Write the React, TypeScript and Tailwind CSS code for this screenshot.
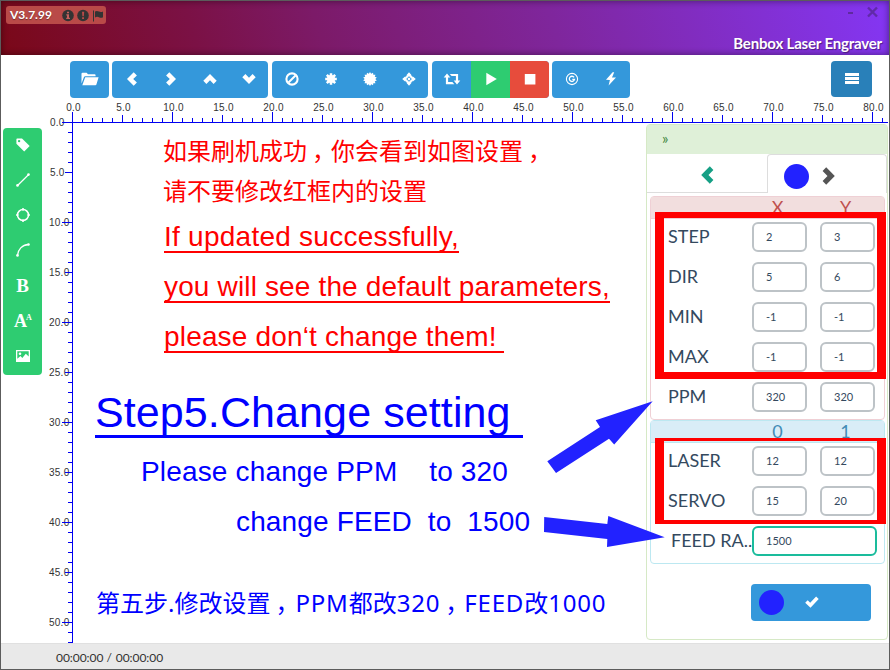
import React from "react";

const xMarks = Array.from({ length: 82 }, (_, i) => i);
const yMarks = Array.from({ length: 53 }, (_, i) => i);

function tickSize(i: number) {
  return i % 10 === 0 ? 10 : i % 5 === 0 ? 7 : 4;
}

/* Both rulers; the viewBox uses window coordinates. */
function Rulers() {
  return (
    <svg className="absolute left-0 top-0" width="888" height="545" viewBox="1 98 888 545" shapeRendering="crispEdges">
      <g fill="#333" fontFamily="Liberation Sans, Arial, sans-serif" fontSize="10" letterSpacing="0.25">
        {xMarks.filter((i) => i % 5 === 0).map((i) => (
          <text key={i} x={73.5 + i * 10} y="111" textAnchor="middle">{i.toFixed(1)}</text>
        ))}
        {yMarks.filter((i) => i % 5 === 0).map((i) => (
          <text key={i} x={i < 10 ? 50 : 49} y={126 + i * 10}>{i.toFixed(1)}</text>
        ))}
      </g>
      <g fill="#0000f0">
        <rect x="62" y="122" width="826" height="1" />
        <rect x="72" y="112" width="1" height="531" />
        {xMarks.map((i) => (
          <rect key={i} x={72 + i * 10} y={122 - tickSize(i)} width="1" height={tickSize(i)} />
        ))}
        {yMarks.map((i) => (
          <rect key={i} x={72 - tickSize(i)} y={122 + i * 10} width={tickSize(i)} height="1" />
        ))}
      </g>
    </svg>
  );
}

function Glyph({ children, w = 18, h = 14 }: { children: React.ReactNode; w?: number; h?: number }) {
  return (
    <svg width={w} height={h} viewBox={`0 0 ${w} ${h}`} fill="currentColor" className="block">
      {children}
    </svg>
  );
}

function burst(points: number, cx: number, cy: number, outer: number, inner: number) {
  return Array.from({ length: points * 2 }, (_, i) => {
    const r = i % 2 ? inner : outer;
    const a = (Math.PI * i) / points;
    return `${(cx + r * Math.sin(a)).toFixed(2)},${(cy - r * Math.cos(a)).toFixed(2)}`;
  }).join(" ");
}

const Chevron = ({ turn }: { turn: number }) => (
  <Glyph w={14} h={14}>
    <path transform={`rotate(${turn} 7 7)`} d="M8.7 0.3 11.9 3.4 8.2 7 11.9 10.6 8.7 13.7 2 7Z" />
  </Glyph>
);

const folder = (
  <Glyph>
    <path d="M0.5 11.5V1.8Q0.5 0.8 1.5.8H5.6L7 2.3H13.6Q14.6 2.3 14.6 3.4V4.2H4.3Q3.4 4.2 3 5Z" />
    <path d="M4.2 5.2H17.6L15.4 12.4Q15.2 13.2 14.3 13.2H1.3Z" />
  </Glyph>
);
const ban = (
  <Glyph w={14}>
    <circle cx="7" cy="7" r="5.6" fill="none" stroke="currentColor" strokeWidth="2.1" />
    <path d="M3.5 10.5 10.5 3.5" stroke="currentColor" strokeWidth="2" />
  </Glyph>
);
const flower = (
  <Glyph w={14}>
    <circle cx="7" cy="7" r="4" />
    <path d="M7 1.2V12.8M1.2 7H12.8M2.8 2.8 11.2 11.2M11.2 2.8 2.8 11.2" stroke="currentColor" strokeWidth="2.5" />
  </Glyph>
);
const sun = (
  <Glyph w={14}>
    <polygon points={burst(14, 7, 7, 7, 5.3)} />
  </Glyph>
);
const move = (
  <Glyph w={14}>
    <path d="M7 .2 9.8 3.4H4.2ZM7 13.8 4.2 10.6H9.8ZM.2 7 3.4 4.2V9.8ZM13.8 7 10.6 9.8V4.2Z" />
    <path d="M7 2.8 11.2 7 7 11.2 2.8 7Z" fill="none" stroke="currentColor" strokeWidth="2" />
    <path d="M5.8 5.8H8.2V8.2H5.8Z" />
  </Glyph>
);
const retweet = (
  <Glyph>
    <path d="M4 1.6 7.3 5.5H5.1V10H9.4L11.3 12.2H2.9V5.5H.7ZM6.8 1.9H15.1V8.6H17.3L14 12.5 10.7 8.6H12.9V4.1H8.6Z" />
  </Glyph>
);
const play = <Glyph w={14}><path d="M2.3 .8 12.8 7 2.3 13.2Z" /></Glyph>;
const stop = <Glyph w={14}><path d="M1.8 2H12.4V12.4H1.8Z" /></Glyph>;
const gcode = (
  <Glyph w={14}>
    <circle cx="7" cy="7" r="5.6" fill="none" stroke="currentColor" strokeWidth="1.1" />
    <path d="M9.1 5.4A2.6 2.6 0 1 0 9.5 7.4H7.3" fill="none" stroke="currentColor" strokeWidth="1.3" />
  </Glyph>
);
const bolt = <Glyph w={14}><path d="M8.6.3 2 7.7 5.9 8 4.6 13.6 12 5.6 8 5.5 10.2.3Z" /></Glyph>;

const tag = (
  <Glyph w={14}>
    <path fillRule="evenodd" d="M.4 1.2Q.4.4 1.2.4H6L13.7 8.1 8.2 13.6.4 5.8ZM3.1 1.9A1.2 1.2 0 1 0 3.1 4.3 1.2 1.2 0 1 0 3.1 1.9Z" />
  </Glyph>
);
const line = (
  <Glyph w={14}>
    <path d="M1.3 12.7 12.7 1.5" stroke="currentColor" strokeWidth="1.2" />
    <circle cx="1.5" cy="12.4" r="1.3" /><circle cx="12.5" cy="1.6" r="1.3" />
  </Glyph>
);
const ring = (
  <Glyph w={14}>
    <circle cx="7" cy="7" r="5.5" fill="none" stroke="currentColor" strokeWidth="1.5" />
    <path d="M6 .3H8V2.4H6ZM6 11.6H8V13.7H6ZM.3 6H2.4V8H.3ZM11.6 6H13.7V8H11.6Z" />
  </Glyph>
);
const arc = (
  <Glyph w={14}>
    <path d="M1.4 12.5C2 6.5 6 2 12.5 1.5" fill="none" stroke="currentColor" strokeWidth="1.3" />
    <circle cx="1.5" cy="12.4" r="1.3" /><circle cx="12.5" cy="1.5" r="1.3" />
  </Glyph>
);
const image = (
  <Glyph w={14}>
    <path fillRule="evenodd" d="M0 1H14V13H0ZM1.3 2.3V9.8L4.5 7 6.3 9 9.8 4.8 12.7 7.5V2.3Z" />
    <circle cx="4" cy="4.7" r="1.3" />
  </Glyph>
);

function ToolGroup({ items }: { items: { icon: React.ReactNode; tone?: string }[] }) {
  return (
    <div className="flex h-[37px] overflow-hidden rounded bg-[#3498db] text-white">
      {items.map((item, i) => (
        <button key={i} className={`flex w-[39px] items-center justify-center pb-[2px] ${item.tone ?? ""}`}>
          {item.icon}
        </button>
      ))}
    </div>
  );
}

function Field({ value }: { value: string }) {
  return (
    <div className="h-[30px] w-[55px] rounded-[6px] border-2 border-[#bdc3c7] bg-white pl-[12px] text-[11px] leading-[25px] text-[#34495e]">
      {value}
    </div>
  );
}

function Row({ label, x, y }: { label: string; x: string; y: string }) {
  return (
    <div className="flex h-10 items-start">
      <span className="w-[101px] pl-[17px] text-[18px] leading-[28px]">{label}</span>
      <Field value={x} />
      <span className="w-[13px]" />
      <Field value={y} />
    </div>
  );
}

function PanelHead({ a, b, tone }: { a: string; b: string; tone: string }) {
  return (
    <div className={`flex h-[22px] overflow-hidden pl-[99px] text-[18px] leading-[20px] ${tone}`}>
      <span className="w-[55px] text-center">{a}</span>
      <span className="ml-[13px] w-[55px] text-center">{b}</span>
    </div>
  );
}

function SettingsPanel() {
  return (
    <aside className="mt-[26px] h-[516px] w-[242px] rounded border border-[#d6e9c6] bg-white text-[#34495e]">
      <div className="h-[29px] bg-[#dff0d8] pl-[15px] text-[15px] leading-[27px] text-[#3c863d]">»</div>
      <div className="flex h-[39px]">
        <div className="flex w-[120px] items-center justify-center border-b border-[#ddd] pt-[4px] text-[#16a085]">
          <svg width="13" height="18" viewBox="0 0 13 18" fill="currentColor"><path d="M8.8.3 12.4 3.9 7.5 9 12.4 14 8.8 17.7.2 9Z" /></svg>
        </div>
        <div className="flex w-[120px] items-center rounded-t border-x border-t border-[#ddd] pl-[16px] pt-[4px]">
          <div className="h-[25px] w-[25px] rounded-full bg-[#2222ff]" />
          <svg className="ml-[13px]" width="13" height="18" viewBox="0 0 13 18" fill="#555"><path d="M4.2.3.6 3.9 5.5 9 .6 14 4.2 17.7 12.8 9Z" /></svg>
        </div>
      </div>
      <div className="ml-[3px] mt-[3px] h-[224px] w-[235px] rounded border border-[#efd0d5]">
        <PanelHead a="X" b="Y" tone="bg-[#f2dede] text-[#c0504d] border-b border-[#efd0d5]" />
        <div className="pt-[3px]">
          <Row label="STEP" x="2" y="3" />
          <Row label="DIR" x="5" y="6" />
          <Row label="MIN" x="-1" y="-1" />
          <Row label="MAX" x="-1" y="-1" />
          <Row label="PPM" x="320" y="320" />
        </div>
      </div>
      <div className="ml-[3px] h-[144px] w-[235px] rounded border border-[#bce8f1]">
        <PanelHead a="0" b="1" tone="bg-[#d9edf7] text-[#428bb5] border-b border-[#bce8f1]" />
        <div className="pt-[3px]">
          <Row label="LASER" x="12" y="12" />
          <Row label="SERVO" x="15" y="20" />
          <div className="flex">
            <span className="w-[101px] whitespace-nowrap pl-[20px] text-[18px] leading-[28px]">FEED RA..</span>
            <div className="h-[30px] w-[125px] rounded-[6px] border-2 border-[#1abc9c] bg-white pl-[12px] text-[11px] leading-[25px]">1500</div>
          </div>
        </div>
      </div>
      <button className="ml-[104px] mt-[20px] flex h-[37px] w-[120px] items-center rounded bg-[#3498db] pl-[8px] pb-px">
        <span className="h-[25px] w-[25px] rounded-full bg-[#2222ff]" />
        <svg className="ml-[21px]" width="14" height="12" viewBox="0 0 14 12" fill="#fff"><path d="M.2 6.8 2.7 4.3 5.2 6.7 11.1.5 13.7 3 5.5 11.8Z" /></svg>
      </button>
    </aside>
  );
}

/* Half-width form of the full-width comma, centred in a full cell. */
const Comma = () => <span className="mr-[7px] pl-[5px] [font-feature-settings:'halt'] font-['Noto_Sans_CJK_SC',sans-serif]">，</span>;

/* Notes drawn over the work area. */
function Annotations() {
  return (
    <div className="pointer-events-none absolute inset-0 whitespace-pre font-['Liberation_Sans',Arial,sans-serif] text-[28px] leading-[32px] text-[#ff0000]">
      <div className="absolute left-[162px] top-[36px] font-['Noto_Sans','Noto_Sans_CJK_SC',sans-serif] text-[24px]">如果刷机成功<Comma />你会看到如图设置<Comma /></div>
      <div className="absolute left-[162px] top-[77px] font-['Noto_Sans','Noto_Sans_CJK_SC',sans-serif] text-[24px]">请不要修改红框内的设置</div>
      <div className="absolute left-[163px] top-[123px] h-[32px] w-[295px] border-b-2 tracking-[0.25px]">If updated successfully,</div>
      <div className="absolute left-[163px] top-[173px] h-[32px] w-[446px] border-b-2 tracking-[0.15px]">you will see the default parameters,</div>
      <div className="absolute left-[163px] top-[223px] h-[32px] w-[340px] border-b-2 tracking-[0.17px]">please don‘t change them!</div>
      <div className="absolute left-[94px] top-[290px] h-[50px] w-[428px] border-b-[3px] border-[#0000ff] text-[43px] leading-[48px] tracking-[0.1px] text-[#0000ff]">Step5.Change setting</div>
      <div className="absolute left-[140px] top-[358px] tracking-[0.16px] text-[#0000ff]">Please change PPM    to 320</div>
      <div className="absolute left-[235px] top-[408px] tracking-[0.15px] text-[#0000ff]">change FEED  to  1500</div>
      <div className="absolute left-[95px] top-[488px] font-['Noto_Sans','Noto_Sans_CJK_SC',sans-serif] text-[24px] text-[#0000ff]">第五步.修改设置<Comma /><span className="ml-px tracking-[0.8px]">PPM</span>都改<span className="tracking-[0.8px]">320</span><Comma /><span className="tracking-[0.8px]">FEED</span>改<span className="tracking-[0.8px]">1000</span></div>
      <div className="absolute left-[654px] top-[114px] h-[167px] w-[231px] border-x-[9px] border-b-[7px] border-t-[6px] border-[#ff0000]" />
      <div className="absolute left-[654px] top-[340px] h-[86px] w-[231px] border-x-[9px] border-b-[4px] border-t-[3px] border-[#ff0000]" />
      <svg className="absolute left-0 top-0" width="888" height="545" viewBox="1 98 888 545" fill="#2222ff">
        <path d="M547.3 461.3 556 473 609 438.7 614.2 444.5 652.7 401.3 595.7 420.3 600 427Z" />
        <path d="M544.2 517 544 532 607.3 539 607 547 664.7 537.3 608.3 516 607.3 524Z" />
      </svg>
    </div>
  );
}

export default function App() {
  return (
    <div className="flex h-[670px] w-[890px] flex-col overflow-hidden border border-[#5c5c5c] bg-white font-['Lato',sans-serif]">
      <header className="flex h-[54px] shrink-0 items-start justify-between bg-[linear-gradient(72deg,#7a0818_0%,#7b1145_22%,#7c1a68_36%,#7f269c_62%,#8436f4_100%)] shadow-[inset_0_0_7px_rgba(0,0,0,0.45)]">
        <div className="ml-[5px] mt-[5px] flex h-[18px] w-[100px] items-center rounded-[3px] bg-[#b94a48] pl-1 text-[12px] font-bold text-white">
          <span className="w-[52px] leading-[16px] [text-shadow:0_1px_1px_rgba(0,0,0,.4)]">V3.7.99</span>
          <svg width="42" height="14" viewBox="0 0 42 14" fill="#333">
            <circle cx="6" cy="7.5" r="5.8" />
            <path d="M5 3.8H7V5.3H5ZM4.3 6.3H7V9.7H8V10.9H4.2V9.7H5V7.4H4.3Z" fill="#c0605c" />
            <circle cx="21" cy="7.5" r="5.8" />
            <path d="M20 3.7H22.2L21.8 8.3H20.4ZM20.1 9.2H22V11H20.1Z" fill="#b94a48" />
            <path d="M31 2.5H32V13.5H31ZM33 3.5Q35 2.6 37 3.6T41 3.4V9.3Q39 10.3 37 9.3T33 9.6Z" />
          </svg>
        </div>
        <div className="flex flex-col items-end pr-[7px]">
          <div className="mr-[4px] mt-[5px] flex items-center gap-[14px]">
            <span className="mt-[2px] h-[2px] w-[5px] bg-[#5f2a9f]" />
            <svg width="11" height="12" viewBox="0 0 11 12" fill="none" stroke="#602aa8" strokeWidth="2.4"><path d="M1 1.5 10 10.5M10 1.5 1 10.5" /></svg>
          </div>
          <h1 className="mt-[15px] text-[15px] font-bold leading-[20px] tracking-[-0.18px] text-white [text-shadow:1px_1px_1px_rgba(0,0,0,.4)]">Benbox Laser Engraver</h1>
        </div>
      </header>

      <nav className="flex h-[43px] shrink-0 items-start gap-[3px] pl-[69px] pt-[6px]">
        <ToolGroup items={[{ icon: folder }]} />
        <ToolGroup items={[{ icon: <Chevron turn={0} /> }, { icon: <Chevron turn={180} /> }, { icon: <Chevron turn={90} /> }, { icon: <Chevron turn={270} /> }]} />
        <div className="ml-px"><ToolGroup items={[{ icon: ban }, { icon: flower }, { icon: sun }, { icon: move }]} /></div>
        <div className="ml-px"><ToolGroup items={[{ icon: retweet }, { icon: play, tone: "bg-[#2ecc71]" }, { icon: stop, tone: "bg-[#e74c3c]" }]} /></div>
        <ToolGroup items={[{ icon: gcode }, { icon: bolt }]} />
        <button className="ml-auto mr-[17px] flex h-[36px] w-[41px] flex-col items-center justify-center gap-px rounded bg-[#2980b9] pb-px">
          <span className="h-[3px] w-[14px] bg-white" />
          <span className="h-[3px] w-[14px] bg-white" />
          <span className="h-[3px] w-[14px] bg-white" />
        </button>
      </nav>

      <main className="relative flex h-[545px] shrink-0 items-start justify-between pl-[2px] pr-px">
        <Rulers />
        <div className="mt-[30px] flex h-[247px] w-[39px] flex-col rounded bg-[#2ecc71] text-white">
          {[tag, line, ring, arc,
            <b className="font-['Liberation_Serif',serif] text-[19px] leading-none">B</b>,
            <span className="flex items-start font-['Liberation_Serif',serif] font-bold"><span className="text-[18px] leading-[18px] tracking-[-1px]">A</span><span className="w-[5px] text-[8px] leading-[11px]">A</span></span>,
            image].map((icon, i) => (
            <button key={i} className="flex flex-1 items-center justify-center pb-[2px]">{icon}</button>
          ))}
        </div>
        <div className="relative">
          <SettingsPanel />
        </div>
        <Annotations />
      </main>

      <footer className="flex flex-1 gap-[4px] border-t border-[#e0e0e0] bg-[#e9e9e9] pl-[55px] text-[12px] leading-[27px] text-[#333]">
        <span className="tracking-[-0.05px]">00:00:00 /</span>
        <span className="tracking-[-0.05px]">00:00:00</span>
      </footer>
    </div>
  );
}
